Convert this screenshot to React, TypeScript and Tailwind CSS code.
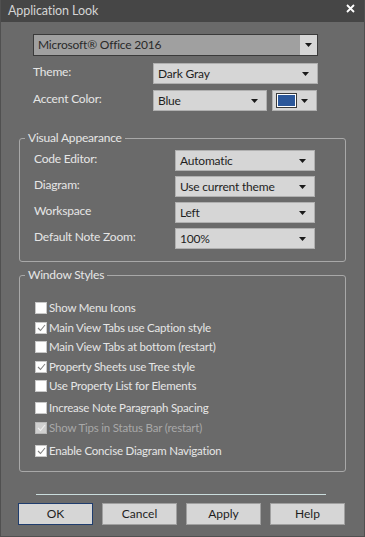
import React from "react";

const font = { fontFamily: 'Lato, "Noto Sans", sans-serif' };

function Arrow() {
  return (
    <svg width="7" height="4" viewBox="0 0 7 4" className="shrink-0">
      <path d="M0 0 H7 L3.5 4 Z" fill="#1a1a1a" />
    </svg>
  );
}

function Combo({ value, width }: { value: string; width: string }) {
  return (
    <div
      className={`${width} h-[21px] flex items-center justify-between border border-[#b0b0b0] bg-[#d6d6d6] pl-[4px] pr-[8px] text-[12px] tracking-[-0.2px] text-[#1e1e1e]`}
    >
      <span>{value}</span>
      <Arrow />
    </div>
  );
}

function Check({ label, checked, disabled }: { label: string; checked?: boolean; disabled?: boolean }) {
  return (
    <div className="flex items-center h-[14px]">
      <div
        className={`w-[12px] h-[12px] shrink-0 flex items-center justify-center border ${
          disabled ? "bg-[#d0d0d0] border-[#b8b8b8]" : "bg-white border-[#c8c8c8]"
        }`}
      >
        {checked && (
          <svg width="9" height="8" viewBox="0 0 9 8">
            <path d="M1 4 L3.5 6.5 L8 1" fill="none" stroke={disabled ? "#f0f0f0" : "#808080"} strokeWidth="1.1" />
          </svg>
        )}
      </div>
      <span className={`ml-[2px] text-[11.5px] tracking-[-0.2px] ${disabled ? "text-[#a8a8a8]" : "text-[#e6e6e6]"}`}>{label}</span>
    </div>
  );
}

function Group({ title, children, className }: { title: string; children: React.ReactNode; className?: string }) {
  return (
    <div className={`relative mx-[18px] border border-[#a8a8a8] rounded-[3px] ${className ?? ""}`}>
      <span className="absolute -top-[9px] left-[5px] bg-[#6a6a6a] px-[3px] text-[12px] tracking-[-0.2px] leading-[16px] text-[#e6e6e6]">
        {title}
      </span>
      {children}
    </div>
  );
}

function Button({ label, primary }: { label: string; primary?: boolean }) {
  return (
    <div
      className={`w-[75px] h-[22px] flex items-center justify-center bg-[#d6d6d6] text-[12px] text-[#1e1e1e] border ${
        primary ? "border-[#1f3d6e]" : "border-[#a0a0a0]"
      }`}
    >
      {label}
    </div>
  );
}

export default function App() {
  const rows: [string, string][] = [
    ["Code Editor:", "Automatic"],
    ["Diagram:", "Use current theme"],
    ["Workspace", "Left"],
    ["Default Note Zoom:", "100%"],
  ];

  return (
    <div style={font} className="w-[365px] h-[537px] bg-[#6a6a6a] border border-[#505050] border-t-0 flex flex-col overflow-hidden">
      {/* Title bar */}
      <div className="h-[22px] bg-[#464646] flex items-center justify-between pl-[7px] pr-[9px] shrink-0">
        <span className="text-[12.5px] tracking-[-0.1px] text-[#d4d4d4]">Application Look</span>
        <svg width="9" height="9" viewBox="0 0 9 9" className="-mt-[5px]">
          <path d="M1 1 L8 8 M8 1 L1 8" stroke="#ffffff" strokeWidth="1.8" />
        </svg>
      </div>

      {/* Preset */}
      <div className="ml-[32px] mt-[12px] w-[285px] h-[22px] flex border border-[#3a3a3a]">
        <div className="flex-1 bg-[#a0a0a0] flex items-center pl-[4px] text-[12px] tracking-[-0.2px] text-[#2a2a2a]">Microsoft® Office 2016</div>
        <div className="w-[17px] bg-[#d6d6d6] flex items-center justify-center">
          <Arrow />
        </div>
      </div>

      <div className="ml-[32px] mt-[7px] flex items-center">
        <span className="w-[120px] text-[12px] tracking-[-0.2px] text-[#e6e6e6] -mt-[4px]">Theme:</span>
        <Combo value="Dark Gray" width="w-[165px]" />
      </div>

      <div className="ml-[32px] mt-[6px] flex items-center">
        <span className="w-[120px] text-[12px] tracking-[-0.2px] text-[#e6e6e6] -mt-[4px]">Accent Color:</span>
        <Combo value="Blue" width="w-[114px]" />
        <div className="ml-[5px] w-[45px] h-[21px] border border-[#b0b0b0] bg-[#d6d6d6] flex items-center justify-between pl-[4px] pr-[8px]">
          <div className="w-[19px] h-[13px] bg-[#2b579a] border border-white outline outline-1 outline-[#3a3a3a]" />
          <Arrow />
        </div>
      </div>

      <Group title="Visual Appearance" className="mt-[27px] h-[124px] pt-[11px]">
        <div className="flex flex-col gap-[5px]">
          {rows.map(([l, v]) => (
            <div key={l} className="flex items-center ml-[14px]">
              <span className="w-[141px] text-[12px] tracking-[-0.2px] text-[#e6e6e6] -mt-[4px]">{l}</span>
              <Combo value={v} width="w-[140px]" />
            </div>
          ))}
        </div>
      </Group>

      <Group title="Window Styles" className="mt-[13px] h-[197px] pt-[25px] pl-[15px]">
        <div className="flex flex-col">
          <Check label="Show Menu Icons" />
          <div className="mt-[6px]"><Check label="Main View Tabs use Caption style" checked /></div>
          <div className="mt-[5px]"><Check label="Main View Tabs at bottom (restart)" /></div>
          <div className="mt-[6px]"><Check label="Property Sheets use Tree style" checked /></div>
          <div className="mt-[5px]"><Check label="Use Property List for Elements" /></div>
          <div className="mt-[8px]"><Check label="Increase Note Paragraph Spacing" /></div>
          <div className="mt-[6px]"><Check label="Show Tips in Status Bar (restart)" checked disabled /></div>
          <div className="mt-[9px]"><Check label="Enable Concise Diagram Navigation" checked /></div>
        </div>
      </Group>

      <div className="ml-[35px] mt-[22px] w-[290px] h-px bg-[#cadcdc]" />

      <div className="mt-[8px] ml-[17px] flex gap-[9px]">
        <Button label="OK" primary />
        <Button label="Cancel" />
        <Button label="Apply" />
        <Button label="Help" />
      </div>
    </div>
  );
}
